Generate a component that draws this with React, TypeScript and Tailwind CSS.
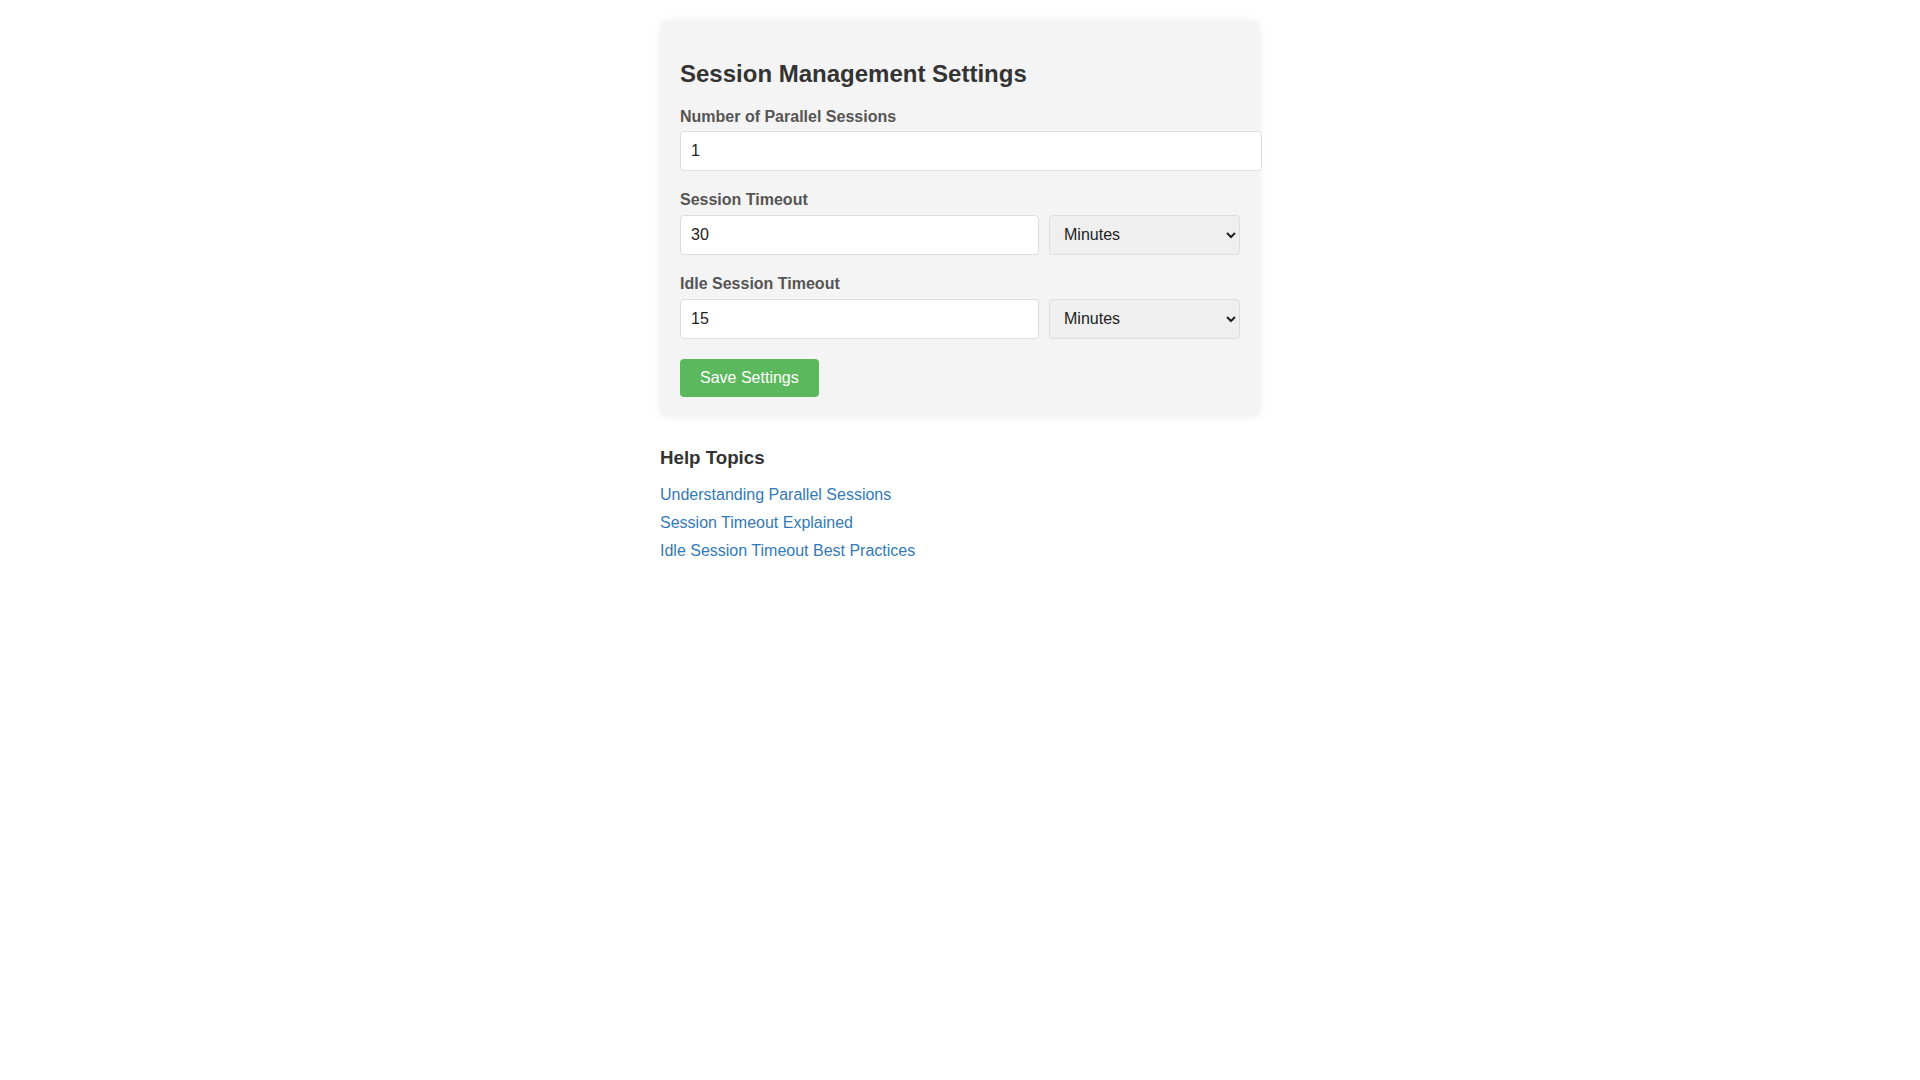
export default function App() {
  const fieldCls =
    "box-content h-[18.4px] px-[10px] py-[10px] border border-[#dddddd] rounded-[4px] bg-white text-[16px] leading-[18.4px] text-[#222] outline-none";
  const selectCls =
    "box-border w-[191px] h-[40.4px] px-[10px] border border-[#dddddd] rounded-[4px] bg-[#efefef] text-[16px] text-[#222]";

  return (
    <div className="min-h-screen bg-white p-[20px] font-['Liberation_Sans',Arial,sans-serif] text-[#333]">
      <div className="mx-auto max-w-[600px]">
        {/* Settings card */}
        <div className="rounded-[8px] bg-[#f4f4f4] p-[20px] shadow-[0_0_10px_rgba(0,0,0,0.06)]">
          <h2 className="mt-[20px] mb-[20px] text-[24px] leading-[27.6px] font-bold text-[#333]">
            Session Management Settings
          </h2>

          <div className="mb-[20px]">
            <label className="mb-[5px] block text-[16px] leading-[18.4px] font-bold text-[#555]">
              Number of Parallel Sessions
            </label>
            <input type="number" defaultValue={1} className={`${fieldCls} w-full block`} />
          </div>

          <div className="mb-[20px]">
            <label className="mb-[5px] block text-[16px] leading-[18.4px] font-bold text-[#555]">
              Session Timeout
            </label>
            <div className="flex gap-[10px]">
              <input type="number" defaultValue={30} className={`${fieldCls} w-[337px]`} />
              <select defaultValue="minutes" className={selectCls}>
                <option value="seconds">Seconds</option>
                <option value="minutes">Minutes</option>
                <option value="hours">Hours</option>
              </select>
            </div>
          </div>

          <div className="mb-[20px]">
            <label className="mb-[5px] block text-[16px] leading-[18.4px] font-bold text-[#555]">
              Idle Session Timeout
            </label>
            <div className="flex gap-[10px]">
              <input type="number" defaultValue={15} className={`${fieldCls} w-[337px]`} />
              <select defaultValue="minutes" className={selectCls}>
                <option value="seconds">Seconds</option>
                <option value="minutes">Minutes</option>
                <option value="hours">Hours</option>
              </select>
            </div>
          </div>

          <button className="rounded-[4px] bg-[#5cb85c] px-[20px] py-[10px] text-[16px] leading-[18.4px] text-white">
            Save Settings
          </button>
        </div>

        {/* Help */}
        <div className="mt-[30px]">
          <h3 className="mb-[17px] text-[18.72px] leading-[21.5px] font-bold text-[#333]">Help Topics</h3>
          <ul className="list-none p-0">
            <li className="mb-[10px] leading-[18px]">
              <a href="#" className="text-[16px] text-[#337ab7]">Understanding Parallel Sessions</a>
            </li>
            <li className="mb-[10px] leading-[18px]">
              <a href="#" className="text-[16px] text-[#337ab7]">Session Timeout Explained</a>
            </li>
            <li className="mb-[10px] leading-[18px]">
              <a href="#" className="text-[16px] text-[#337ab7]">Idle Session Timeout Best Practices</a>
            </li>
          </ul>
        </div>
      </div>
    </div>
  );
}
